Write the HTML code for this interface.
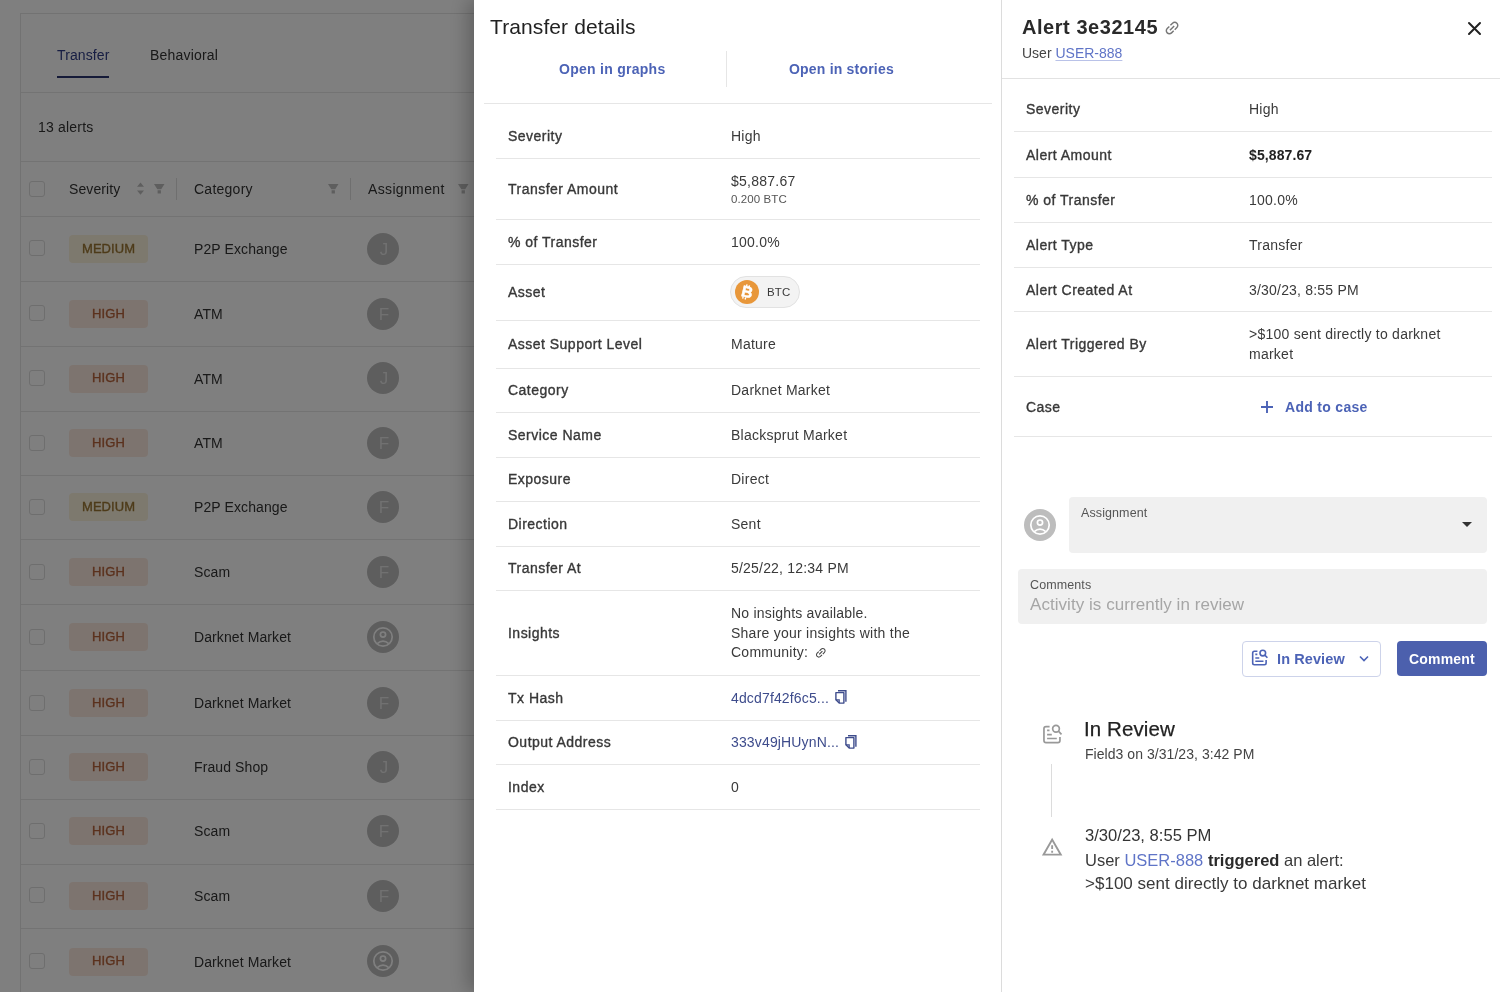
<!DOCTYPE html><html><head><meta charset="utf-8"><style>
*{margin:0;padding:0;box-sizing:border-box}
html,body{width:1500px;height:992px;overflow:hidden;background:#fff;font-family:"Liberation Sans",sans-serif;color:#333}
.t{position:absolute;white-space:nowrap;will-change:transform}
.r{position:absolute}
svg{position:absolute;overflow:visible}
</style></head><body><div class="r" style="left:0;top:0;width:1500px;height:992px;overflow:hidden"><div class="r" style="left:20px;top:13px;width:500px;height:1100px;border:1px solid #e4e4e4;background:#fff"></div><div class="t" style="left:56.70px;top:46.35px;font-size:14px;line-height:18px;color:#2f3c86;letter-spacing:0.1px;">Transfer</div><div class="r" style="left:56.7px;top:75.5px;width:52.5px;height:2px;background:#2a3470"></div><div class="t" style="left:149.80px;top:46.35px;font-size:14px;line-height:18px;color:#333;letter-spacing:0.2px;">Behavioral</div><div class="r" style="left:21px;top:92px;width:480px;height:1px;background:#e6e6e6"></div><div class="t" style="left:37.50px;top:118.35px;font-size:14px;line-height:18px;color:#333;letter-spacing:0.2px;">13 alerts</div><div class="r" style="left:21px;top:161px;width:480px;height:1px;background:#e6e6e6"></div><div class="r" style="left:21px;top:216px;width:480px;height:1px;background:#e6e6e6"></div><div class="r" style="left:28.6px;top:181px;width:16px;height:16px;border:1.7px solid #dcdcdc;border-radius:3px;background:#fff"></div><div class="t" style="left:68.90px;top:179.95px;font-size:14px;line-height:18px;color:#333;letter-spacing:0.1px;">Severity</div><svg style="left:136px;top:182px" width="9" height="14" viewBox="0 0 9 14"><path d="M4.5 0.5 L8 4.8 H1 Z M1 8.4 H8 L4.5 12.8 Z" fill="#bdbdbd"/></svg><svg style="left:153.8px;top:183.6px" width="11" height="10" viewBox="0 0 11 10"><path d="M0 0 H10.5 L7.2 5.2 H3.3 Z M3.6 6.3 H6.9 V9.6 H3.6 Z" fill="#bdbdbd"/></svg><div class="r" style="left:176px;top:178px;width:1px;height:22px;background:#dedede"></div><div class="t" style="left:193.60px;top:179.95px;font-size:14px;line-height:18px;color:#333;letter-spacing:0.25px;">Category</div><svg style="left:328px;top:183.6px" width="11" height="10" viewBox="0 0 11 10"><path d="M0 0 H10.5 L7.2 5.2 H3.3 Z M3.6 6.3 H6.9 V9.6 H3.6 Z" fill="#bdbdbd"/></svg><div class="r" style="left:350px;top:178px;width:1px;height:22px;background:#dedede"></div><div class="t" style="left:367.60px;top:179.95px;font-size:14px;line-height:18px;color:#333;letter-spacing:0.35px;">Assignment</div><svg style="left:458px;top:183.6px" width="11" height="10" viewBox="0 0 11 10"><path d="M0 0 H10.5 L7.2 5.2 H3.3 Z M3.6 6.3 H6.9 V9.6 H3.6 Z" fill="#bdbdbd"/></svg><div class="r" style="left:21px;top:281px;width:480px;height:1px;background:#e6e6e6"></div><div class="r" style="left:28.6px;top:240.45px;width:16px;height:16px;border:1.7px solid #dcdcdc;border-radius:3px;background:#fff"></div><div class="r" style="left:68.7px;top:235px;width:79px;height:28px;background:#fbf3dc;border-radius:4px"></div><div class="t" style="left:81.70px;top:240.75px;font-size:13px;line-height:16px;color:#9a7532;letter-spacing:0.05px;-webkit-text-stroke:0.35px #9a7532;">MEDIUM</div><div class="t" style="left:193.60px;top:239.80px;font-size:14px;line-height:18px;color:#333;letter-spacing:0.1px;">P2P Exchange</div><div class="r" style="left:367px;top:233px;width:32px;height:32px;background:#bdbdbd;border-radius:50%"></div><div class="t" style="left:383.50px;top:238.76px;font-size:17px;line-height:21px;color:#e2e2e2;transform:translateX(-50%)">J</div><div class="r" style="left:21px;top:346px;width:480px;height:1px;background:#e6e6e6"></div><div class="r" style="left:28.6px;top:305.40000000000003px;width:16px;height:16px;border:1.7px solid #dcdcdc;border-radius:3px;background:#fff"></div><div class="r" style="left:68.7px;top:300px;width:79px;height:28px;background:#fbe9df;border-radius:4px"></div><div class="t" style="left:91.70px;top:305.70px;font-size:13px;line-height:16px;color:#b5623a;letter-spacing:0.1px;-webkit-text-stroke:0.35px #b5623a;">HIGH</div><div class="t" style="left:193.60px;top:304.75px;font-size:14px;line-height:18px;color:#333;letter-spacing:0.1px;">ATM</div><div class="r" style="left:367px;top:298px;width:32px;height:32px;background:#bdbdbd;border-radius:50%"></div><div class="t" style="left:383.50px;top:303.71px;font-size:17px;line-height:21px;color:#e2e2e2;transform:translateX(-50%)">F</div><div class="r" style="left:21px;top:411px;width:480px;height:1px;background:#e6e6e6"></div><div class="r" style="left:28.6px;top:370.15000000000003px;width:16px;height:16px;border:1.7px solid #dcdcdc;border-radius:3px;background:#fff"></div><div class="r" style="left:68.7px;top:365px;width:79px;height:28px;background:#fbe9df;border-radius:4px"></div><div class="t" style="left:91.70px;top:370.45px;font-size:13px;line-height:16px;color:#b5623a;letter-spacing:0.1px;-webkit-text-stroke:0.35px #b5623a;">HIGH</div><div class="t" style="left:193.60px;top:369.50px;font-size:14px;line-height:18px;color:#333;letter-spacing:0.1px;">ATM</div><div class="r" style="left:367px;top:362px;width:32px;height:32px;background:#bdbdbd;border-radius:50%"></div><div class="t" style="left:383.50px;top:368.46px;font-size:17px;line-height:21px;color:#e2e2e2;transform:translateX(-50%)">J</div><div class="r" style="left:21px;top:475px;width:480px;height:1px;background:#e6e6e6"></div><div class="r" style="left:28.6px;top:434.65000000000003px;width:16px;height:16px;border:1.7px solid #dcdcdc;border-radius:3px;background:#fff"></div><div class="r" style="left:68.7px;top:429px;width:79px;height:28px;background:#fbe9df;border-radius:4px"></div><div class="t" style="left:91.70px;top:434.95px;font-size:13px;line-height:16px;color:#b5623a;letter-spacing:0.1px;-webkit-text-stroke:0.35px #b5623a;">HIGH</div><div class="t" style="left:193.60px;top:434.00px;font-size:14px;line-height:18px;color:#333;letter-spacing:0.1px;">ATM</div><div class="r" style="left:367px;top:427px;width:32px;height:32px;background:#bdbdbd;border-radius:50%"></div><div class="t" style="left:383.50px;top:432.96px;font-size:17px;line-height:21px;color:#e2e2e2;transform:translateX(-50%)">F</div><div class="r" style="left:21px;top:539px;width:480px;height:1px;background:#e6e6e6"></div><div class="r" style="left:28.6px;top:499.0px;width:16px;height:16px;border:1.7px solid #dcdcdc;border-radius:3px;background:#fff"></div><div class="r" style="left:68.7px;top:493px;width:79px;height:28px;background:#fbf3dc;border-radius:4px"></div><div class="t" style="left:81.70px;top:499.30px;font-size:13px;line-height:16px;color:#9a7532;letter-spacing:0.05px;-webkit-text-stroke:0.35px #9a7532;">MEDIUM</div><div class="t" style="left:193.60px;top:498.35px;font-size:14px;line-height:18px;color:#333;letter-spacing:0.1px;">P2P Exchange</div><div class="r" style="left:367px;top:491px;width:32px;height:32px;background:#bdbdbd;border-radius:50%"></div><div class="t" style="left:383.50px;top:497.31px;font-size:17px;line-height:21px;color:#e2e2e2;transform:translateX(-50%)">F</div><div class="r" style="left:21px;top:604px;width:480px;height:1px;background:#e6e6e6"></div><div class="r" style="left:28.6px;top:563.55px;width:16px;height:16px;border:1.7px solid #dcdcdc;border-radius:3px;background:#fff"></div><div class="r" style="left:68.7px;top:558px;width:79px;height:28px;background:#fbe9df;border-radius:4px"></div><div class="t" style="left:91.70px;top:563.85px;font-size:13px;line-height:16px;color:#b5623a;letter-spacing:0.1px;-webkit-text-stroke:0.35px #b5623a;">HIGH</div><div class="t" style="left:193.60px;top:562.90px;font-size:14px;line-height:18px;color:#333;letter-spacing:0.1px;">Scam</div><div class="r" style="left:367px;top:556px;width:32px;height:32px;background:#bdbdbd;border-radius:50%"></div><div class="t" style="left:383.50px;top:561.86px;font-size:17px;line-height:21px;color:#e2e2e2;transform:translateX(-50%)">F</div><div class="r" style="left:21px;top:670px;width:480px;height:1px;background:#e6e6e6"></div><div class="r" style="left:28.6px;top:629.0px;width:16px;height:16px;border:1.7px solid #dcdcdc;border-radius:3px;background:#fff"></div><div class="r" style="left:68.7px;top:623px;width:79px;height:28px;background:#fbe9df;border-radius:4px"></div><div class="t" style="left:91.70px;top:629.30px;font-size:13px;line-height:16px;color:#b5623a;letter-spacing:0.1px;-webkit-text-stroke:0.35px #b5623a;">HIGH</div><div class="t" style="left:193.60px;top:628.35px;font-size:14px;line-height:18px;color:#333;letter-spacing:0.1px;">Darknet Market</div><svg style="left:367px;top:621.2px" width="32" height="32" viewBox="0 0 32 32"><circle cx="16" cy="16" r="16" fill="#bdbdbd"/><circle cx="16" cy="16" r="9.2" fill="none" stroke="#fff" stroke-width="1.7"/><circle cx="16" cy="13.6" r="2.6" fill="none" stroke="#fff" stroke-width="1.7"/><path d="M10.2 22.6 Q16 17.6 21.8 22.6" fill="none" stroke="#fff" stroke-width="1.7"/></svg><div class="r" style="left:21px;top:735px;width:480px;height:1px;background:#e6e6e6"></div><div class="r" style="left:28.6px;top:694.5999999999999px;width:16px;height:16px;border:1.7px solid #dcdcdc;border-radius:3px;background:#fff"></div><div class="r" style="left:68.7px;top:689px;width:79px;height:28px;background:#fbe9df;border-radius:4px"></div><div class="t" style="left:91.70px;top:694.90px;font-size:13px;line-height:16px;color:#b5623a;letter-spacing:0.1px;-webkit-text-stroke:0.35px #b5623a;">HIGH</div><div class="t" style="left:193.60px;top:693.95px;font-size:14px;line-height:18px;color:#333;letter-spacing:0.1px;">Darknet Market</div><div class="r" style="left:367px;top:687px;width:32px;height:32px;background:#bdbdbd;border-radius:50%"></div><div class="t" style="left:383.50px;top:692.91px;font-size:17px;line-height:21px;color:#e2e2e2;transform:translateX(-50%)">F</div><div class="r" style="left:21px;top:799px;width:480px;height:1px;background:#e6e6e6"></div><div class="r" style="left:28.6px;top:758.9499999999999px;width:16px;height:16px;border:1.7px solid #dcdcdc;border-radius:3px;background:#fff"></div><div class="r" style="left:68.7px;top:753px;width:79px;height:28px;background:#fbe9df;border-radius:4px"></div><div class="t" style="left:91.70px;top:759.25px;font-size:13px;line-height:16px;color:#b5623a;letter-spacing:0.1px;-webkit-text-stroke:0.35px #b5623a;">HIGH</div><div class="t" style="left:193.60px;top:758.30px;font-size:14px;line-height:18px;color:#333;letter-spacing:0.1px;">Fraud Shop</div><div class="r" style="left:367px;top:751px;width:32px;height:32px;background:#bdbdbd;border-radius:50%"></div><div class="t" style="left:383.50px;top:757.26px;font-size:17px;line-height:21px;color:#e2e2e2;transform:translateX(-50%)">J</div><div class="r" style="left:21px;top:864px;width:480px;height:1px;background:#e6e6e6"></div><div class="r" style="left:28.6px;top:823.05px;width:16px;height:16px;border:1.7px solid #dcdcdc;border-radius:3px;background:#fff"></div><div class="r" style="left:68.7px;top:817px;width:79px;height:28px;background:#fbe9df;border-radius:4px"></div><div class="t" style="left:91.70px;top:823.35px;font-size:13px;line-height:16px;color:#b5623a;letter-spacing:0.1px;-webkit-text-stroke:0.35px #b5623a;">HIGH</div><div class="t" style="left:193.60px;top:822.40px;font-size:14px;line-height:18px;color:#333;letter-spacing:0.1px;">Scam</div><div class="r" style="left:367px;top:815px;width:32px;height:32px;background:#bdbdbd;border-radius:50%"></div><div class="t" style="left:383.50px;top:821.36px;font-size:17px;line-height:21px;color:#e2e2e2;transform:translateX(-50%)">F</div><div class="r" style="left:21px;top:928px;width:480px;height:1px;background:#e6e6e6"></div><div class="r" style="left:28.6px;top:887.4px;width:16px;height:16px;border:1.7px solid #dcdcdc;border-radius:3px;background:#fff"></div><div class="r" style="left:68.7px;top:882px;width:79px;height:28px;background:#fbe9df;border-radius:4px"></div><div class="t" style="left:91.70px;top:887.70px;font-size:13px;line-height:16px;color:#b5623a;letter-spacing:0.1px;-webkit-text-stroke:0.35px #b5623a;">HIGH</div><div class="t" style="left:193.60px;top:886.75px;font-size:14px;line-height:18px;color:#333;letter-spacing:0.1px;">Scam</div><div class="r" style="left:367px;top:880px;width:32px;height:32px;background:#bdbdbd;border-radius:50%"></div><div class="t" style="left:383.50px;top:885.71px;font-size:17px;line-height:21px;color:#e2e2e2;transform:translateX(-50%)">F</div><div class="r" style="left:21px;top:995px;width:480px;height:1px;background:#e6e6e6"></div><div class="r" style="left:28.6px;top:953.15px;width:16px;height:16px;border:1.7px solid #dcdcdc;border-radius:3px;background:#fff"></div><div class="r" style="left:68.7px;top:948px;width:79px;height:28px;background:#fbe9df;border-radius:4px"></div><div class="t" style="left:91.70px;top:953.45px;font-size:13px;line-height:16px;color:#b5623a;letter-spacing:0.1px;-webkit-text-stroke:0.35px #b5623a;">HIGH</div><div class="t" style="left:193.60px;top:952.50px;font-size:14px;line-height:18px;color:#333;letter-spacing:0.1px;">Darknet Market</div><svg style="left:367px;top:945.35px" width="32" height="32" viewBox="0 0 32 32"><circle cx="16" cy="16" r="16" fill="#bdbdbd"/><circle cx="16" cy="16" r="9.2" fill="none" stroke="#fff" stroke-width="1.7"/><circle cx="16" cy="13.6" r="2.6" fill="none" stroke="#fff" stroke-width="1.7"/><path d="M10.2 22.6 Q16 17.6 21.8 22.6" fill="none" stroke="#fff" stroke-width="1.7"/></svg></div>
<div class="r" style="left:0px;top:0px;width:1500px;height:992px;background:rgba(0,0,0,0.5)"></div>
<div class="r" style="left:474px;top:0px;width:527px;height:992px;background:#fff;box-shadow:-6px 0 18px rgba(0,0,0,0.25)"></div><div class="t" style="left:490.00px;top:14.22px;font-size:21px;line-height:26px;color:#222;letter-spacing:0.1px;">Transfer details</div><div class="t" style="left:558.70px;top:60.35px;font-size:14px;line-height:18px;font-weight:700;color:#4c63b6;letter-spacing:0.27px;">Open in graphs</div><div class="r" style="left:726px;top:51px;width:1px;height:36px;background:#e6e6e6"></div><div class="t" style="left:789.30px;top:60.35px;font-size:14px;line-height:18px;font-weight:700;color:#4c63b6;letter-spacing:0.2px;">Open in stories</div><div class="r" style="left:484px;top:103px;width:508px;height:1px;background:#e6e6e6"></div><div class="r" style="left:495.5px;top:158px;width:484.5px;height:1px;background:#e6e6e6"></div><div class="r" style="left:495.5px;top:219px;width:484.5px;height:1px;background:#e6e6e6"></div><div class="r" style="left:495.5px;top:264px;width:484.5px;height:1px;background:#e6e6e6"></div><div class="r" style="left:495.5px;top:320px;width:484.5px;height:1px;background:#e6e6e6"></div><div class="r" style="left:495.5px;top:368px;width:484.5px;height:1px;background:#e6e6e6"></div><div class="r" style="left:495.5px;top:412px;width:484.5px;height:1px;background:#e6e6e6"></div><div class="r" style="left:495.5px;top:457px;width:484.5px;height:1px;background:#e6e6e6"></div><div class="r" style="left:495.5px;top:501px;width:484.5px;height:1px;background:#e6e6e6"></div><div class="r" style="left:495.5px;top:546px;width:484.5px;height:1px;background:#e6e6e6"></div><div class="r" style="left:495.5px;top:590px;width:484.5px;height:1px;background:#e6e6e6"></div><div class="r" style="left:495.5px;top:675px;width:484.5px;height:1px;background:#e6e6e6"></div><div class="r" style="left:495.5px;top:720px;width:484.5px;height:1px;background:#e6e6e6"></div><div class="r" style="left:495.5px;top:764px;width:484.5px;height:1px;background:#e6e6e6"></div><div class="r" style="left:495.5px;top:809px;width:484.5px;height:1px;background:#e6e6e6"></div><div class="t" style="left:507.70px;top:127.35px;font-size:14px;line-height:18px;color:#383838;letter-spacing:0.48px;-webkit-text-stroke:0.35px #383838;">Severity</div><div class="t" style="left:507.70px;top:180.00px;font-size:14px;line-height:18px;color:#383838;letter-spacing:0.48px;-webkit-text-stroke:0.35px #383838;">Transfer Amount</div><div class="t" style="left:507.70px;top:232.80px;font-size:14px;line-height:18px;color:#383838;letter-spacing:0.48px;-webkit-text-stroke:0.35px #383838;">% of Transfer</div><div class="t" style="left:507.70px;top:283.20px;font-size:14px;line-height:18px;color:#383838;letter-spacing:0.48px;-webkit-text-stroke:0.35px #383838;">Asset</div><div class="t" style="left:507.70px;top:335.00px;font-size:14px;line-height:18px;color:#383838;letter-spacing:0.48px;-webkit-text-stroke:0.35px #383838;">Asset Support Level</div><div class="t" style="left:507.70px;top:381.00px;font-size:14px;line-height:18px;color:#383838;letter-spacing:0.48px;-webkit-text-stroke:0.35px #383838;">Category</div><div class="t" style="left:507.70px;top:425.50px;font-size:14px;line-height:18px;color:#383838;letter-spacing:0.48px;-webkit-text-stroke:0.35px #383838;">Service Name</div><div class="t" style="left:507.70px;top:470.10px;font-size:14px;line-height:18px;color:#383838;letter-spacing:0.48px;-webkit-text-stroke:0.35px #383838;">Exposure</div><div class="t" style="left:507.70px;top:514.80px;font-size:14px;line-height:18px;color:#383838;letter-spacing:0.48px;-webkit-text-stroke:0.35px #383838;">Direction</div><div class="t" style="left:507.70px;top:559.40px;font-size:14px;line-height:18px;color:#383838;letter-spacing:0.48px;-webkit-text-stroke:0.35px #383838;">Transfer At</div><div class="t" style="left:507.70px;top:624.05px;font-size:14px;line-height:18px;color:#383838;letter-spacing:0.48px;-webkit-text-stroke:0.35px #383838;">Insights</div><div class="t" style="left:507.70px;top:688.65px;font-size:14px;line-height:18px;color:#383838;letter-spacing:0.48px;-webkit-text-stroke:0.35px #383838;">Tx Hash</div><div class="t" style="left:507.70px;top:733.20px;font-size:14px;line-height:18px;color:#383838;letter-spacing:0.48px;-webkit-text-stroke:0.35px #383838;">Output Address</div><div class="t" style="left:507.70px;top:777.75px;font-size:14px;line-height:18px;color:#383838;letter-spacing:0.48px;-webkit-text-stroke:0.35px #383838;">Index</div><div class="t" style="left:731.00px;top:127.35px;font-size:14px;line-height:18px;color:#3a3a3a;letter-spacing:0.25px;">High</div><div class="t" style="left:731.00px;top:172.15px;font-size:14px;line-height:18px;color:#3a3a3a;letter-spacing:0.25px;">$5,887.67</div><div class="t" style="left:731.00px;top:192.02px;font-size:11.5px;line-height:14px;color:#555;letter-spacing:0.1px;">0.200 BTC</div><div class="t" style="left:731.00px;top:232.80px;font-size:14px;line-height:18px;color:#3a3a3a;letter-spacing:0.25px;">100.0%</div><div class="r" style="left:730.3px;top:276.3px;width:69.4px;height:31.4px;background:#f3f3f3;border:1px solid #e2e2e2;border-radius:16px"></div><svg style="left:735.2px;top:280.2px" width="24" height="24" viewBox="0 0 24 24"><circle cx="12" cy="12" r="12" fill="#e8973a"/><text x="12.3" y="17.2" text-anchor="middle" font-family="Liberation Sans" font-weight="700" font-size="15.5" fill="#fff" stroke="#fff" stroke-width="0.5" transform="rotate(14 12 12)">B</text><path d="M10.2 4.6v2.2M12.8 4.9v2.2M9.4 17.2v2.2M12 17.5v2.2" stroke="#fff" stroke-width="1.4" transform="rotate(14 12 12)"/></svg><div class="t" style="left:767.30px;top:285.32px;font-size:11.5px;line-height:14px;color:#3a3a3a;letter-spacing:0.1px;">BTC</div><div class="t" style="left:731.00px;top:335.00px;font-size:14px;line-height:18px;color:#3a3a3a;letter-spacing:0.25px;">Mature</div><div class="t" style="left:731.00px;top:381.00px;font-size:14px;line-height:18px;color:#3a3a3a;letter-spacing:0.25px;">Darknet Market</div><div class="t" style="left:731.00px;top:425.50px;font-size:14px;line-height:18px;color:#3a3a3a;letter-spacing:0.25px;">Blacksprut Market</div><div class="t" style="left:731.00px;top:470.10px;font-size:14px;line-height:18px;color:#3a3a3a;letter-spacing:0.25px;">Direct</div><div class="t" style="left:731.00px;top:514.80px;font-size:14px;line-height:18px;color:#3a3a3a;letter-spacing:0.25px;">Sent</div><div class="t" style="left:731.00px;top:559.40px;font-size:14px;line-height:18px;color:#3a3a3a;letter-spacing:0.2px;">5/25/22, 12:34 PM</div><div class="t" style="left:731.00px;top:604.15px;font-size:14px;line-height:18px;color:#3a3a3a;letter-spacing:0.2px;">No insights available.</div><div class="t" style="left:731.00px;top:624.05px;font-size:14px;line-height:18px;color:#3a3a3a;letter-spacing:0.25px;">Share your insights with the</div><div class="t" style="left:731.00px;top:643.45px;font-size:14px;line-height:18px;color:#3a3a3a;letter-spacing:0.25px;">Community:</div><svg style="left:814.20px;top:645.60px" width="13.6" height="13.6" viewBox="0 0 24 24"><path transform="rotate(-45 12 12)" d="M3.9 12c0-1.71 1.39-3.1 3.1-3.1h4V7H7c-2.76 0-5 2.24-5 5s2.24 5 5 5h4v-1.9H7c-1.71 0-3.1-1.39-3.1-3.1zM8 13h8v-2H8v2zm9-6h-4v1.9h4c1.71 0 3.1 1.39 3.1 3.1s-1.39 3.1-3.1 3.1h-4V17h4c2.76 0 5-2.24 5-5s-2.24-5-5-5z" fill="#444"/></svg><div class="t" style="left:731.00px;top:688.65px;font-size:14px;line-height:18px;color:#3e4c8c;letter-spacing:0.15px;">4dcd7f42f6c5...</div><svg style="left:834px;top:689px" width="14" height="16" viewBox="0 0 14 16"><path d="M4 1.7 H11.9 V12.7" fill="none" stroke="#3e4c8c" stroke-width="1.4"/><path d="M1.9 3.6 H9.9 V14.1 H5.2 L1.9 10.8 Z" fill="none" stroke="#3e4c8c" stroke-width="1.4" stroke-linejoin="round"/><path d="M1.9 10.8 H5.2 V14.1" fill="none" stroke="#3e4c8c" stroke-width="1.2"/></svg><div class="t" style="left:731.00px;top:733.20px;font-size:14px;line-height:18px;color:#3e4c8c;letter-spacing:0.15px;">333v49jHUynN...</div><svg style="left:843.6px;top:733.5px" width="14" height="16" viewBox="0 0 14 16"><path d="M4 1.7 H11.9 V12.7" fill="none" stroke="#3e4c8c" stroke-width="1.4"/><path d="M1.9 3.6 H9.9 V14.1 H5.2 L1.9 10.8 Z" fill="none" stroke="#3e4c8c" stroke-width="1.4" stroke-linejoin="round"/><path d="M1.9 10.8 H5.2 V14.1" fill="none" stroke="#3e4c8c" stroke-width="1.2"/></svg><div class="t" style="left:731.00px;top:777.75px;font-size:14px;line-height:18px;color:#3a3a3a;">0</div>
<div class="r" style="left:1001px;top:0px;width:499px;height:992px;background:#fff;border-left:1px solid #dcdcdc"></div><div class="t" style="left:1022.30px;top:14.77px;font-size:20px;line-height:25px;font-weight:700;color:#2a2a2a;letter-spacing:0.55px;">Alert 3e32145</div><svg style="left:1162.95px;top:18.95px" width="18.1" height="18.1" viewBox="0 0 24 24"><path transform="rotate(-45 12 12)" d="M3.9 12c0-1.71 1.39-3.1 3.1-3.1h4V7H7c-2.76 0-5 2.24-5 5s2.24 5 5 5h4v-1.9H7c-1.71 0-3.1-1.39-3.1-3.1zM8 13h8v-2H8v2zm9-6h-4v1.9h4c1.71 0 3.1 1.39 3.1 3.1s-1.39 3.1-3.1 3.1h-4V17h4c2.76 0 5-2.24 5-5s-2.24-5-5-5z" fill="#777"/></svg><div class="t" style="left:1022.30px;top:44.15px;font-size:14px;line-height:18px;color:#444;">User <span style="color:#5f74c7;text-decoration:underline;text-decoration-color:#b9c2e8;text-underline-offset:1.5px">USER-888</span></div><svg style="left:1467.5px;top:22px" width="13" height="13" viewBox="0 0 13 13"><path d="M1 1 L12 12 M12 1 L1 12" stroke="#222" stroke-width="2" stroke-linecap="round"/></svg><div class="r" style="left:1002px;top:78px;width:498px;height:1px;background:#e2e2e2"></div><div class="r" style="left:1014px;top:131px;width:477.7px;height:1px;background:#e6e6e6"></div><div class="r" style="left:1014px;top:177px;width:477.7px;height:1px;background:#e6e6e6"></div><div class="r" style="left:1014px;top:222px;width:477.7px;height:1px;background:#e6e6e6"></div><div class="r" style="left:1014px;top:267px;width:477.7px;height:1px;background:#e6e6e6"></div><div class="r" style="left:1014px;top:311px;width:477.7px;height:1px;background:#e6e6e6"></div><div class="r" style="left:1014px;top:376px;width:477.7px;height:1px;background:#e6e6e6"></div><div class="r" style="left:1014px;top:436px;width:477.7px;height:1px;background:#e6e6e6"></div><div class="t" style="left:1026.40px;top:99.85px;font-size:14px;line-height:18px;color:#383838;letter-spacing:0.48px;-webkit-text-stroke:0.35px #383838;">Severity</div><div class="t" style="left:1026.40px;top:145.65px;font-size:14px;line-height:18px;color:#383838;letter-spacing:0.48px;-webkit-text-stroke:0.35px #383838;">Alert Amount</div><div class="t" style="left:1026.40px;top:191.15px;font-size:14px;line-height:18px;color:#383838;letter-spacing:0.48px;-webkit-text-stroke:0.35px #383838;">% of Transfer</div><div class="t" style="left:1026.40px;top:236.15px;font-size:14px;line-height:18px;color:#383838;letter-spacing:0.48px;-webkit-text-stroke:0.35px #383838;">Alert Type</div><div class="t" style="left:1026.40px;top:280.65px;font-size:14px;line-height:18px;color:#383838;letter-spacing:0.48px;-webkit-text-stroke:0.35px #383838;">Alert Created At</div><div class="t" style="left:1026.40px;top:335.15px;font-size:14px;line-height:18px;color:#383838;letter-spacing:0.48px;-webkit-text-stroke:0.35px #383838;">Alert Triggered By</div><div class="t" style="left:1026.40px;top:397.65px;font-size:14px;line-height:18px;color:#383838;letter-spacing:0.48px;-webkit-text-stroke:0.35px #383838;">Case</div><div class="t" style="left:1249.40px;top:99.85px;font-size:14px;line-height:18px;color:#3a3a3a;letter-spacing:0.25px;">High</div><div class="t" style="left:1249.40px;top:145.65px;font-size:14px;line-height:18px;font-weight:700;color:#222;letter-spacing:0.1px;">$5,887.67</div><div class="t" style="left:1249.40px;top:191.15px;font-size:14px;line-height:18px;color:#3a3a3a;letter-spacing:0.25px;">100.0%</div><div class="t" style="left:1249.40px;top:236.15px;font-size:14px;line-height:18px;color:#3a3a3a;letter-spacing:0.25px;">Transfer</div><div class="t" style="left:1249.40px;top:280.65px;font-size:14px;line-height:18px;color:#3a3a3a;letter-spacing:0.2px;">3/30/23, 8:55 PM</div><div class="t" style="left:1249.40px;top:325.15px;font-size:14px;line-height:18px;color:#3a3a3a;letter-spacing:0.25px;">&gt;$100 sent directly to darknet</div><div class="t" style="left:1249.40px;top:345.15px;font-size:14px;line-height:18px;color:#3a3a3a;letter-spacing:0.25px;">market</div><svg style="left:1261px;top:400.5px" width="12" height="12" viewBox="0 0 12 12"><path d="M6 0 V12 M0 6 H12" stroke="#4c63b6" stroke-width="1.9"/></svg><div class="t" style="left:1285.00px;top:397.65px;font-size:14px;line-height:18px;font-weight:700;color:#4c63b6;letter-spacing:0.3px;">Add to case</div><svg style="left:1024.2px;top:509.20000000000005px" width="32" height="32" viewBox="0 0 32 32"><circle cx="16" cy="16" r="16" fill="#bdbdbd"/><circle cx="16" cy="16" r="9.2" fill="none" stroke="#fff" stroke-width="1.7"/><circle cx="16" cy="13.6" r="2.6" fill="none" stroke="#fff" stroke-width="1.7"/><path d="M10.2 22.6 Q16 17.6 21.8 22.6" fill="none" stroke="#fff" stroke-width="1.7"/></svg><div class="r" style="left:1069px;top:497.3px;width:418.3px;height:55.4px;background:#f0f0f0;border-radius:4px"></div><div class="t" style="left:1081.00px;top:504.97px;font-size:12.5px;line-height:16px;color:#555;letter-spacing:0.1px;">Assignment</div><svg style="left:1461.5px;top:522px" width="10" height="5" viewBox="0 0 10 5"><path d="M0 0 H10 L5 5 Z" fill="#333"/></svg><div class="r" style="left:1018.3px;top:569px;width:469px;height:55.3px;background:#f0f0f0;border-radius:4px"></div><div class="t" style="left:1030.00px;top:576.67px;font-size:12.5px;line-height:16px;color:#555;letter-spacing:0.1px;">Comments</div><div class="t" style="left:1030.00px;top:594.31px;font-size:17px;line-height:21px;color:#a6a6a6;letter-spacing:0.05px;">Activity is currently in review</div><div class="r" style="left:1242px;top:640.5px;width:139px;height:36px;border:1.3px solid #cdd3ea;border-radius:4px;background:#fff"></div><svg style="left:1246px;top:644.2px" width="26.88" height="26.88" viewBox="0 0 32 32"><path d="M13.6 8.55 H10 Q7.95 8.55 7.95 10.6 V22.6 Q7.95 24.65 10 24.65 H21.9 Q23.95 24.65 23.95 22.6 V19" fill="none" stroke="#4c63b6" stroke-width="1.9"/><path d="M11.1 12.4 H13.5 M11.1 16.6 H15.8 M11.1 20.5 H20.8" stroke="#4c63b6" stroke-width="1.9"/><circle cx="20" cy="10.8" r="3.35" fill="none" stroke="#4c63b6" stroke-width="1.9"/><path d="M22.4 13.2 L25.5 16.3" stroke="#4c63b6" stroke-width="1.9"/></svg><div class="t" style="left:1277.30px;top:650.28px;font-size:14.5px;line-height:18px;font-weight:700;color:#4c63b6;letter-spacing:0.1px;">In Review</div><svg style="left:1358.5px;top:655px" width="10" height="8" viewBox="0 0 10 8"><path d="M1 1.5 L5 5.5 L9 1.5" fill="none" stroke="#4c63b6" stroke-width="1.6"/></svg><div class="r" style="left:1397.3px;top:640.7px;width:90px;height:35.3px;background:#4c60ad;border-radius:4px"></div><div class="t" style="left:1409.30px;top:650.45px;font-size:14px;line-height:18px;font-weight:700;color:#fff;letter-spacing:0.2px;">Comment</div><svg style="left:1036px;top:718px" width="32.00" height="32.00" viewBox="0 0 32 32"><path d="M13.6 8.55 H10 Q7.95 8.55 7.95 10.6 V22.6 Q7.95 24.65 10 24.65 H21.9 Q23.95 24.65 23.95 22.6 V19" fill="none" stroke="#999" stroke-width="1.7"/><path d="M11.1 12.4 H13.5 M11.1 16.6 H15.8 M11.1 20.5 H20.8" stroke="#999" stroke-width="1.7"/><circle cx="20" cy="10.8" r="3.35" fill="none" stroke="#999" stroke-width="1.7"/><path d="M22.4 13.2 L25.5 16.3" stroke="#999" stroke-width="1.7"/></svg><div class="t" style="left:1083.50px;top:715.60px;font-size:20.5px;line-height:26px;color:#222;letter-spacing:0.1px;-webkit-text-stroke:0.25px #222;">In Review</div><div class="t" style="left:1085.00px;top:745.45px;font-size:14px;line-height:18px;color:#444;letter-spacing:0.05px;">Field3 on 3/31/23, 3:42 PM</div><div class="r" style="left:1051.2px;top:764px;width:1px;height:53.3px;background:#dcdcdc"></div><svg style="left:1040.9px;top:835.8px" width="22.3" height="22.3" viewBox="0 0 24 24"><path d="M12 5.99L19.53 19H4.47L12 5.99M12 2L1 21h22L12 2zm1 14h-2v2h2v-2zm0-6h-2v4h2v-4z" fill="#999"/></svg><div class="t" style="left:1085.00px;top:825.45px;font-size:16.6px;line-height:21px;color:#333;">3/30/23, 8:55 PM</div><div class="t" style="left:1085.00px;top:849.78px;font-size:16.5px;line-height:21px;color:#3a3a3a;">User <span style="color:#5f74c7">USER-888</span> <b style="color:#2a2a2a">triggered</b> an alert:</div><div class="t" style="left:1085.00px;top:872.91px;font-size:17px;line-height:21px;color:#3a3a3a;letter-spacing:0.02px;">&gt;$100 sent directly to darknet market</div></body></html>
